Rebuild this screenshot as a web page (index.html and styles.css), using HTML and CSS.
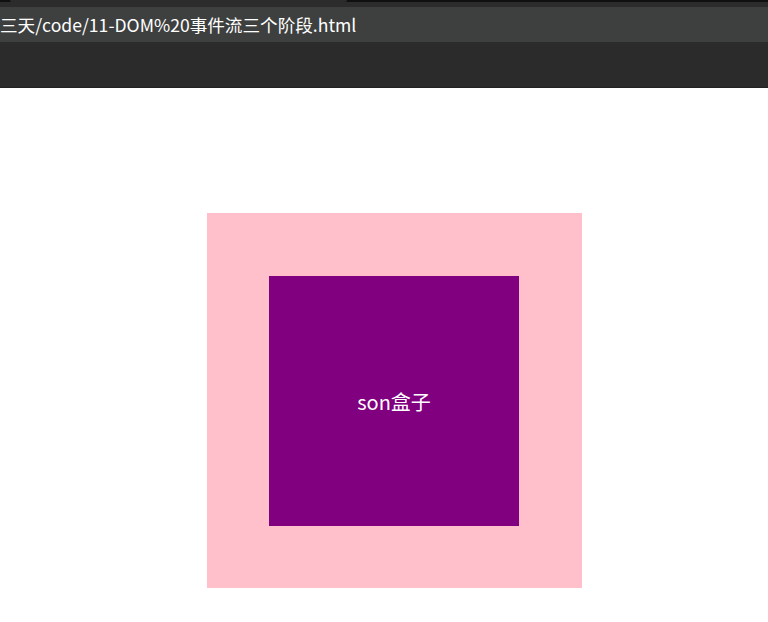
FILE: index.html
```html
<!DOCTYPE html>
<html lang="zh-CN">
<head>
<meta charset="utf-8">
<title>DOM 事件流三个阶段</title>
<link rel="stylesheet" href="styles.css">
</head>
<body>
<header class="chrome">
  <div class="tabstrip"><div class="tab"></div></div>
  <div class="strip-gap"></div>
  <div class="address"><span class="url">三天/code/11-DOM%20事件流三个阶段.html</span></div>
  <div class="toolbar"></div>
</header>
<main class="page">
  <div class="father">
    <div class="son">son盒子</div>
  </div>
</main>
</body>
</html>
```
FILE: styles.css
```css
html, body {
  margin: 0;
  padding: 0;
  background: #ffffff;
}
body {
  width: 768px;
  height: 622px;
  overflow: hidden;
  font-family: "Noto Sans CJK SC", "Noto Sans", sans-serif;
}
.chrome {
  display: flex;
  flex-direction: column;
}
.tabstrip {
  height: 2px;
  background: #101010;
  display: flex;
}
.tab {
  margin-left: 10px;
  width: 337px;
  height: 2px;
  background: #2c2c2c;
  border-radius: 0 0 3px 3px;
}
.strip-gap {
  height: 5px;
  background: #2c2c2c;
}
.address {
  height: 35px;
  background: #3e403f;
  display: flex;
  align-items: center;
  overflow: hidden;
}
.url {
  color: #ffffff;
  font-size: 17.6px;
  line-height: 20px;
  white-space: nowrap;
}
.toolbar {
  height: 45px;
  background: #2b2b2b;
  border-bottom: 1px solid #222222;
}
.page {
  padding-top: 125px;
  padding-left: 207px;
}
.father {
  width: 375px;
  height: 375px;
  box-sizing: border-box;
  padding: 63px 0 0 62px;
  background: pink;
}
.son {
  width: 250px;
  height: 250px;
  background: purple;
  color: #ffffff;
  font-size: 20px;
  display: flex;
  align-items: center;
  justify-content: center;
}
```
